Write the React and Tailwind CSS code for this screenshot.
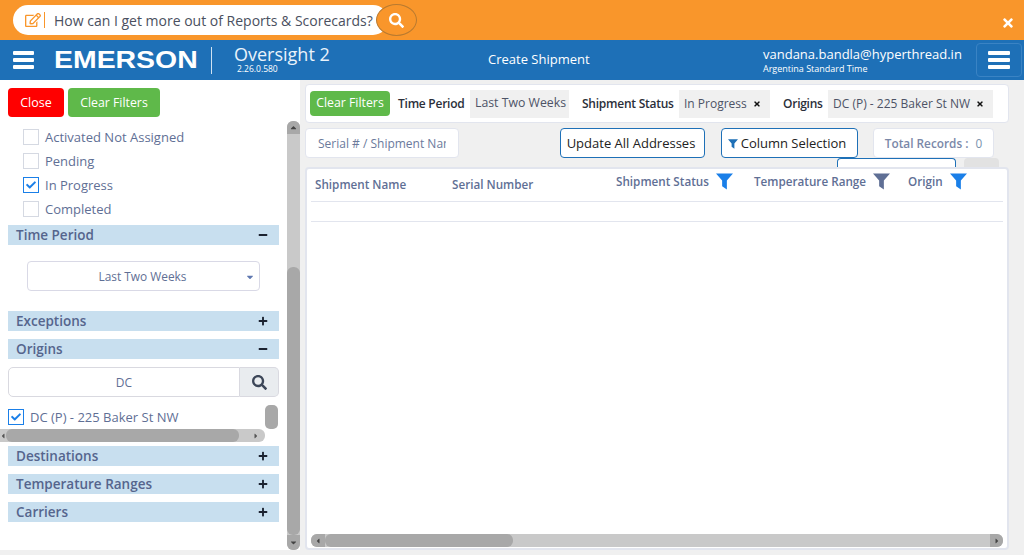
import React from "react";
import { FaSearch, FaTimes, FaPlus, FaMinus, FaRegEdit, FaCheck, FaCaretDown, FaCaretUp, FaCaretLeft, FaCaretRight } from "react-icons/fa";

const Burger = ({ className }) => (
  <div className={`flex flex-col justify-between ${className}`}>
    <div className="h-[4px] bg-white rounded-[1px]" />
    <div className="h-[4px] bg-white rounded-[1px]" />
    <div className="h-[4px] bg-white rounded-[1px]" />
  </div>
);

const Funnel = ({ className }) => (
  <svg viewBox="0 0 18 17" className={className} fill="currentColor">
    <path d="M0 0H18L11.5 7.5V17L6.5 13.5V7.5Z" />
  </svg>
);

const Box = ({ checked }) => (
  <div className={`w-[16px] h-[16px] border flex items-center justify-center bg-white shrink-0 ${checked ? "border-[#1a7fe8]" : "border-[#d5d9e2]"}`}>
    {checked && <FaCheck className="text-[#1a7fe8] text-[10px]" />}
  </div>
);

const CheckRow = ({ label, checked }) => (
  <div className="flex items-center h-[24px] pl-[23px]">
    <Box checked={checked} />
    <span className="ml-[6px] text-[13px] leading-[18px] text-[#5f6f95]">{label}</span>
  </div>
);

const SectionHead = ({ title, open, className = "" }) => (
  <div className={`h-[20px] ml-[8px] w-[271px] bg-[#c8dfef] flex items-center justify-between pl-[8px] pr-[11px] ${className}`}>
    <span className="text-[13.5px] leading-[18px] -mt-[1px] font-semibold text-[#55658d]">{title}</span>
    {open ? <FaMinus className="text-[10px] text-[#1b2230]" /> : <FaPlus className="text-[10px] text-[#1b2230]" />}
  </div>
);

const Chip = ({ label, close, className = "" }) => (
  <div className={`h-[28px] bg-[#f0f0f0] flex items-center px-[5px] text-[#4d5366] whitespace-nowrap shrink-0 ${className}`}>
    <span>{label}</span>
    {close && <FaTimes className="ml-auto mr-[4px] text-[8px] text-[#111]" />}
  </div>
);

const ChipLabel = ({ children, className = "" }) => (
  <span className={`text-[12px] tracking-[-0.25px] font-semibold text-[#2b2f3a] whitespace-nowrap shrink-0 ${className}`}>{children}</span>
);

const ColHead = ({ label, width, icon, gap, className = "" }) => (
  <div className={`flex items-center shrink-0 ${className}`} style={{ width }}>
    <span className="text-[11.7px] font-semibold text-[#5f6f95] whitespace-nowrap">{label}</span>
    {icon && <Funnel className={`w-[17px] h-[17px] ${gap} ${icon}`} />}
  </div>
);

export default function App() {
  return (
    <div className="w-[1024px] h-[555px] overflow-hidden flex flex-col bg-[#f0f0f0] font-['Open_Sans',sans-serif]">
      {/* barra naranja */}
      <div className="h-[40px] bg-[#f9962b] relative flex items-center pl-[13px] shrink-0">
        <div className="w-[375px] h-[30px] bg-white rounded-full flex items-center pl-[12px]">
          <FaRegEdit className="text-[16px] text-[#f9962b]" />
          <div className="w-px h-[16px] bg-[#f9962b] ml-[3px]" />
          <span className="ml-[9px] text-[14px] text-[#4a5060] whitespace-nowrap">How can I get more out of Reports &amp; Scorecards?</span>
        </div>
        <div className="w-[41px] h-[32px] rounded-[50%] bg-[#f9962b] border border-[#b87a30] flex items-center justify-center absolute left-[376px] top-[4px]">
          <FaSearch className="text-white text-[15px]" />
        </div>
        <FaTimes className="absolute left-[1001px] top-[16px] text-white text-[14px]" />
      </div>

      {/* header azul */}
      <div className="h-[40px] bg-[#1e70b7] flex items-center text-white shrink-0">
        <Burger className="w-[21px] h-[18px] ml-[13px]" />
        <div className="ml-[20px] w-[144px] flex items-start">
          <span className="font-['Liberation_Sans',sans-serif] font-bold text-[24.5px] leading-none scale-x-[1.16] origin-left whitespace-nowrap">EMERSON</span>
        </div>
        <div className="w-px h-[27px] bg-[#cfe2f2] ml-[13px]" />
        <div className="ml-[22px] w-[159px] flex flex-col">
          <span className="text-[18px] leading-[17px] text-[#eaf3fb]">Oversight 2</span>
          <span className="text-[8.5px] leading-[10px] mt-[1px] ml-[3px]">2.26.0.580</span>
        </div>
        <span className="ml-[95px] w-[275px] text-[13px]">Create Shipment</span>
        <div className="flex flex-col w-[213px]">
          <span className="text-[13px] leading-[18px] whitespace-nowrap">vandana.bandla@hyperthread.in</span>
          <span className="text-[9px] leading-[12px] whitespace-nowrap">Argentina Standard Time</span>
        </div>
        <div className="w-[46px] h-[34px] border border-[#3a83c4] rounded-[4px] flex items-center justify-center">
          <Burger className="w-[22px] h-[18px]" />
        </div>
      </div>

      <div className="flex flex-1 min-h-0">
        {/* panel de filtros */}
        <div className="w-[300px] h-[470px] bg-white flex shrink-0">
          <div className="w-[287px]">
            <div className="flex gap-[4px] pt-[8px] pl-[8px]">
              <button className="w-[56px] h-[29px] pt-[1px] rounded-[4px] bg-[#ff0000] text-white text-[12.5px]">Close</button>
              <button className="w-[92px] h-[29px] pt-[1px] rounded-[4px] bg-[#5fb94a] text-white text-[12.3px]">Clear Filters</button>
            </div>
            <div className="mt-[8px]">
              <CheckRow label="Activated Not Assigned" />
              <CheckRow label="Pending" />
              <CheckRow label="In Progress" checked />
              <CheckRow label="Completed" />
            </div>
            <SectionHead title="Time Period" open className="mt-[4px]" />
            <div className="mt-[16px] ml-[27px] w-[233px] h-[30px] pt-[1px] border border-[#d9d9e6] rounded-[4px] flex items-center relative">
              <span className="w-full text-center pr-[2px] text-[11.9px] text-[#5f6f95]">Last Two Weeks</span>
              <FaCaretDown className="absolute right-[4px] top-[10px] text-[10px] text-[#5f78b0]" />
            </div>
            <SectionHead title="Exceptions" className="mt-[20px]" />
            <SectionHead title="Origins" open className="mt-[8px]" />
            <div className="mt-[8px] ml-[8px] w-[271px] h-[30px] flex">
              <div className="flex-1 pt-[1px] border border-[#d9d9e0] rounded-l-[5px] flex items-center justify-center text-[12px] text-[#5f6f95]">DC</div>
              <div className="w-[39px] bg-[#e9ecef] border border-l-0 border-[#d9d9e0] rounded-r-[5px] flex items-center justify-center">
                <FaSearch className="text-[#3c4658] text-[15px]" />
              </div>
            </div>
            <div className="mt-[8px] h-[24px] flex items-center pl-[8px] relative">
              <Box checked />
              <span className="ml-[6px] mt-[1px] text-[13px] text-[#5f6f95]">DC (P) - 225 Baker St NW</span>
              <div className="absolute left-[265px] top-[0px] w-[13px] h-[24px] bg-[#a8a8a8] rounded-[5px]" />
            </div>
            <div className="w-[265px] h-[13px] bg-[#c9c9c9] rounded-r-[6px] flex items-center overflow-hidden">
              <div className="w-[6px] h-[13px] flex items-center justify-end shrink-0">
                <FaCaretLeft className="text-[8px] text-[#555]" />
              </div>
              <div className="w-[233px] h-[13px] bg-[#a8a8a8] rounded-[6px] shrink-0" />
              <FaCaretRight className="ml-[13px] text-[8px] text-[#555]" />
            </div>
            <SectionHead title="Destinations" className="mt-[4px]" />
            <SectionHead title="Temperature Ranges" className="mt-[8px]" />
            <SectionHead title="Carriers" className="mt-[8px]" />
          </div>
          {/* scrollbar vertical */}
          <div className="w-[13px] mt-[41px] h-[429px] bg-[#c9c9c9] rounded-[6px] flex flex-col items-center">
            <div className="h-[13px] w-full bg-[#a8a8a8] rounded-t-[6px] flex items-center justify-center">
              <FaCaretUp className="text-[9px] text-[#444]" />
            </div>
            <div className="flex-1" />
            <div className="h-[268px] w-full bg-[#a8a8a8] rounded-[6px]" />
            <div className="h-[15px] w-full bg-[#a8a8a8] rounded-b-[6px] flex items-center justify-center">
              <FaCaretDown className="text-[9px] text-[#444]" />
            </div>
          </div>
        </div>

        {/* contenido */}
        <div className="w-[724px] pl-[5px] pt-[4px]">
          <div className="w-[704px] h-[39px] bg-white border border-[#e2e5ee] rounded-[4px] flex items-center pl-[4px]">
            <button className="w-[80px] h-[25px] rounded-[4px] bg-[#5fb94a] text-white text-[12.3px] -mt-[1px] shrink-0 whitespace-nowrap">Clear Filters</button>
            <ChipLabel className="ml-[8px] mt-[1px] w-[66px]">Time Period</ChipLabel>
            <Chip label="Last Two Weeks" className="ml-[6px] w-[99px] h-[26px] text-[12.3px]" />
            <ChipLabel className="ml-[13px] w-[92px]">Shipment Status</ChipLabel>
            <Chip label="In Progress" close className="ml-[5px] w-[91px] text-[12px]" />
            <ChipLabel className="ml-[13px] w-[40px]">Origins</ChipLabel>
            <Chip label="DC (P) - 225 Baker St NW" close className="ml-[5px] w-[165px] text-[12px]" />
          </div>

          <div className="flex items-start mt-[5px] h-[30px]">
            <input
              placeholder="Serial # / Shipment Name"
              className="w-[154px] h-[30px] bg-white border border-[#e2e5ee] rounded-[4px] px-[12px] text-[12px] outline-none placeholder:text-[#6b7a9c]"
            />
            <button className="ml-[101px] w-[145px] h-[30px] pt-[1px] pr-[3px] bg-white border border-[#1e70b7] rounded-[4px] text-[13px] text-[#222] whitespace-nowrap">Update All Addresses</button>
            <button className="ml-[16px] w-[137px] h-[30px] pt-[1px] pr-[5px] bg-white border border-[#1e70b7] rounded-[4px] text-[13px] text-[#222] flex items-center justify-center">
              <Funnel className="w-[10px] h-[10px] text-[#1e70b7] mr-[3px]" />
              Column Selection
            </button>
            <div className="ml-[15px] w-[121px] h-[30px] pt-[1px] bg-white border border-[#e2e5ee] rounded-[4px] flex items-center justify-center text-[11.8px] font-semibold text-[#7a88a8]">
              Total Records :<span className="ml-[7px] font-normal text-[#7a93ad]">0</span>
            </div>
          </div>

          <div className="flex h-[9px] pl-[532px]">
            <div className="w-[119px] h-[9px] bg-white border border-b-0 border-[#1e70b7] rounded-t-[4px]" />
            <div className="ml-[8px] w-[35px] h-[9px] bg-[#e2e2e2] rounded-t-[4px]" />
          </div>

          <div className="w-[704px] h-[383px] bg-white border-2 border-[#e2e5ee] rounded-[4px] px-[4px] flex flex-col">
            <div className="h-[33px] border-b border-[#e2e5ee] flex items-center pl-[4px] shrink-0">
              <ColHead label="Shipment Name" width={137} className="mt-[-1px]" />
              <ColHead label="Serial Number" width={164} className="mt-[-1px]" />
              <ColHead label="Shipment Status" width={138} icon="text-[#1a7fe8]" gap="ml-[7px]" className="-mt-[6px]" />
              <ColHead label="Temperature Range" width={154} icon="text-[#5f6f95]" gap="ml-[7px]" className="-mt-[6px]" />
              <ColHead label="Origin" width={60} icon="text-[#1a7fe8]" gap="ml-[7px]" className="-mt-[6px]" />
            </div>
            <div className="h-[20px] border-b border-[#e2e5ee] shrink-0" />
            <div className="flex-1" />
            <div className="h-[13px] mb-[1px] bg-[#c9c9c9] rounded-[6px] flex items-center relative shrink-0">
              <div className="w-[14px] h-full bg-[#a8a8a8] rounded-l-[6px] flex items-center justify-center">
                <FaCaretLeft className="text-[8px] text-[#444]" />
              </div>
              <div className="w-[188px] h-full bg-[#a8a8a8] rounded-[6px]" />
              <div className="flex-1" />
              <div className="w-[13px] h-full bg-[#a8a8a8] rounded-r-[6px] flex items-center justify-center">
                <FaCaretRight className="text-[8px] text-[#444]" />
              </div>
            </div>
          </div>
        </div>
      </div>
    </div>
  );
}
